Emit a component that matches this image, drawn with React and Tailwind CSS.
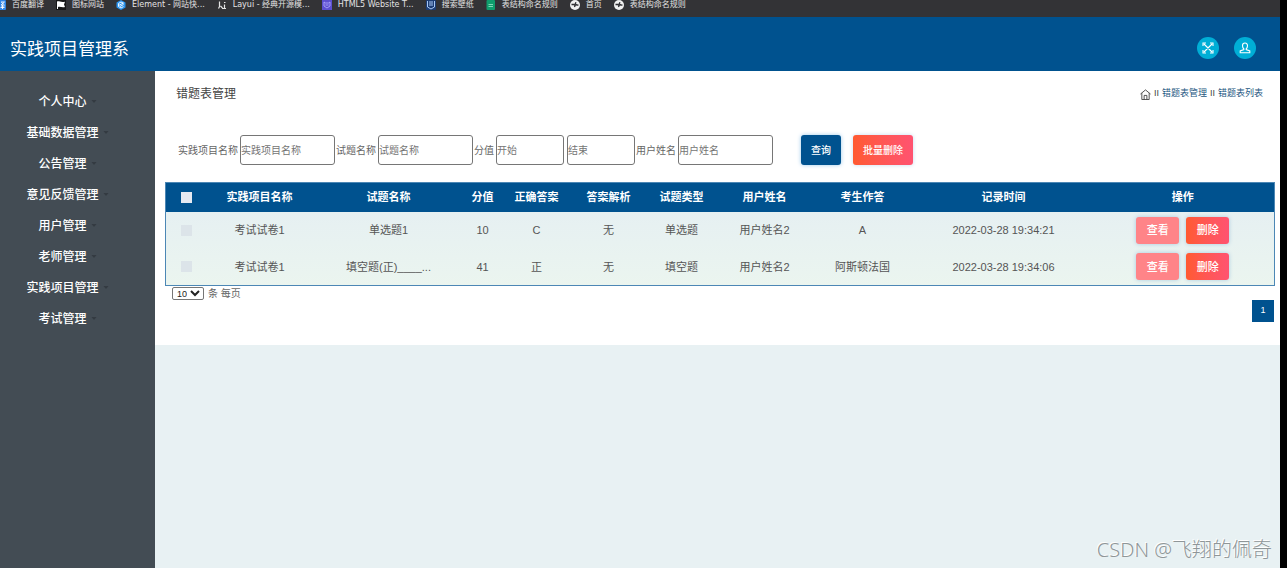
const bookmarks = [
  { label: '百度翻译', icon: 'translate' },
  { label: '图标网站', icon: 'flag' },
  { label: 'Element - 网站快...', icon: 'element' },
  { label: 'Layui - 经典开源模...', icon: 'layui' },
  { label: 'HTML5 Website T...', icon: 'html5' },
  { label: '搜索壁纸', icon: 'wallpaper' },
  { label: '表结构命名规则', icon: 'doc' },
  { label: '首页', icon: 'globe' },
  { label: '表结构命名规则', icon: 'globe' },
];

const menuItems = [
  '个人中心',
  '基础数据管理',
  '公告管理',
  '意见反馈管理',
  '用户管理',
  '老师管理',
  '实践项目管理',
  '考试管理',
];

const columns = [
  { title: '实践项目名称', width: 'w-[104px]' },
  { title: '试题名称', width: 'w-[154px]' },
  { title: '分值', width: 'w-[34px]' },
  { title: '正确答案', width: 'w-[74px]' },
  { title: '答案解析', width: 'w-[70px]' },
  { title: '试题类型', width: 'w-[76px]' },
  { title: '用户姓名', width: 'w-[90px]' },
  { title: '考生作答', width: 'w-[106px]' },
  { title: '记录时间', width: 'w-[176px]' },
  { title: '操作', width: 'w-[183px]' },
];

const rows = [
  ['考试试卷1', '单选题1', '10', 'C', '无', '单选题', '用户姓名2', 'A', '2022-03-28 19:34:21'],
  ['考试试卷1', '填空题(正)____...', '41', '正', '无', '填空题', '用户姓名2', '阿斯顿法国', '2022-03-28 19:34:06'],
];

const BookmarkIcon = ({ name }) => {
  switch (name) {
    case 'translate':
      return (
        <svg viewBox="0 0 10 10" className="w-2.5 h-2.5 shrink-0">
          <rect width="10" height="10" rx="1" fill="#2f86e8" />
          <path d="M5 2h3.500L5 5M5.500 2.500l3 2.500M6.500 4.500V9M5 6h3.500M4.500 7.500h4" stroke="#fff" strokeWidth="0.9" fill="none" />
        </svg>
      );
    case 'flag':
      return (
        <svg viewBox="0 0 10 10" className="w-2.5 h-2.5 shrink-0">
          <rect width="10" height="10" fill="#171717" />
          <path d="M1 1.500c2-1 3 1 8 .2L8 4.500l1 2.500c-3 .8-5-.8-7 0v2H1z" fill="#fff" />
        </svg>
      );
    case 'element':
      return (
        <svg viewBox="0 0 10 10" className="w-2.5 h-2.5 shrink-0">
          <path d="M5 0l4.500 2.500v5L5 10 .5 7.500v-5z" fill="#2b94ef" />
          <path d="M7.500 3.200L5 2 2.500 3.500v3L5 8l2.500-1.400M3 5.300L7.500 3M4 6.500l3.500-2" stroke="#fff" strokeWidth="0.9" fill="none" />
        </svg>
      );
    case 'layui':
      return (
        <svg viewBox="0 0 10 10" className="w-2.5 h-2.5 shrink-0">
          <path d="M2.500 1.500v5L1.500 8.500M3.500 6l2 2M7.500 4.500V8M7 2.500h1.500M5 8.500h4" stroke="#e4e4e4" strokeWidth="1.2" fill="none" />
        </svg>
      );
    case 'html5':
      return (
        <svg viewBox="0 0 10 10" className="w-2.5 h-2.5 shrink-0">
          <rect width="10" height="10" fill="#5c4fd0" />
          <path d="M2 2l1.500 1h3L8 2v4L5 8 2 6zM3.500 5h3" stroke="#b5adff" strokeWidth="0.8" fill="none" />
        </svg>
      );
    case 'wallpaper':
      return (
        <svg viewBox="0 0 10 10" className="w-2.5 h-2.5 shrink-0">
          <rect width="10" height="10" rx="1" fill="#1d3d74" />
          <path d="M1.500 1v6L5 9l3.500-2V1M4 1v5M6 1v5" stroke="#a9c8f5" strokeWidth="1" fill="none" />
        </svg>
      );
    case 'doc':
      return (
        <svg viewBox="0 0 10 10" className="w-2.5 h-2.5 shrink-0">
          <rect x="0.500" width="8.500" height="10" rx="1" fill="#0f9d6c" />
          <path d="M2.500 4.500h4.500M2.500 6.500h4.500" stroke="#7ed9b7" strokeWidth="1" />
        </svg>
      );
    default:
      return (
        <svg viewBox="0 0 10 10" className="w-2.5 h-2.5 shrink-0">
          <circle cx="5" cy="5" r="5" fill="#f1f1f1" />
          <path d="M1.500 4.500h2.300l1.400 1.200-.8 1.300M8.500 5.200L6.800 5 5.200 3.800 6 2.200" stroke="#2f2f33" strokeWidth="1.300" fill="none" />
        </svg>
      );
  }
};

const BookmarkBar = () => (
  <div className="flex items-start gap-3 h-[17px] bg-[#333336] overflow-hidden whitespace-nowrap font-['DejaVu_Sans','Noto_Sans_CJK_SC',sans-serif]">
    {bookmarks.map((item, index) => (
      <a key={index} href="#" className="flex items-center gap-[6px] h-[10px] text-[8px] leading-[10px] text-[#e3e3e3] first:-ml-1">
        <BookmarkIcon name={item.icon} />
        {item.label}
      </a>
    ))}
  </div>
);

const Header = () => (
  <header className="flex items-center justify-between h-[54px] pt-2 pl-[10px] pr-6 bg-[#00528f]">
    <h1 className="pt-1 text-[17px] leading-6 text-white">实践项目管理系</h1>
    <div className="flex gap-[15px]">
      <button type="button" aria-label="全屏" className="flex items-center justify-center w-[22px] h-[22px] rounded-full bg-[#00aed6] text-white">
        <svg viewBox="0 0 12 12" className="w-3 h-3" fill="none" stroke="currentColor" strokeWidth="1.1">
          <path d="M2 2l8 8M10 2l-8 8M1 4V1h3M8 1h3v3M11 8v3H8M4 11H1V8" />
        </svg>
      </button>
      <button type="button" aria-label="用户" className="flex items-center justify-center w-[22px] h-[22px] rounded-full bg-[#00aed6] text-white">
        <svg viewBox="0 0 12 12" className="w-3 h-3" fill="none" stroke="currentColor" strokeWidth="1.1">
          <path d="M6 1C4.300 1 3.500 2.200 3.500 3.700c0 1.300.5 2.500 1.300 3.100v.8L1.200 9v1.700h9.600V9L7.200 7.600v-.8c.8-.6 1.300-1.800 1.300-3.100C8.500 2.200 7.700 1 6 1z" />
        </svg>
      </button>
    </div>
  </header>
);

const Sidebar = () => (
  <nav className="w-[155px] shrink-0 pt-[15px] pr-5 bg-[#434c54]">
    <ul>
      {menuItems.map((item) => (
        <li key={item}>
          <a href="#" className="flex items-center justify-center gap-1 h-[31px] text-[12px] font-medium text-white">
            {item}
            <svg viewBox="0 0 6 3" className="w-[6px] h-[3px]">
              <path d="M0.500 0h5L3 3z" fill="#343b42" />
            </svg>
          </a>
        </li>
      ))}
    </ul>
  </nav>
);

const inputClass = 'h-[30px] border border-[#767676] rounded-[3px] bg-white text-[10px] text-[#555] placeholder:text-[#757575]';

const SearchForm = () => (
  <form className="flex items-center pl-[23px] text-[10px] text-[#666]">
    <label htmlFor="project" className="mr-[2px]">实践项目名称</label>
    <input id="project" type="text" placeholder="实践项目名称" className={`${inputClass} w-[95px] mr-px`} />
    <label htmlFor="question" className="mr-[2px]">试题名称</label>
    <input id="question" type="text" placeholder="试题名称" className={`${inputClass} w-[95px] mr-px`} />
    <label htmlFor="scoreStart" className="mr-[2px]">分值</label>
    <input id="scoreStart" type="text" placeholder="开始" className={`${inputClass} w-[68px] mr-[3px]`} />
    <input id="scoreEnd" type="text" aria-label="结束" placeholder="结束" className={`${inputClass} w-[68px] mr-px`} />
    <label htmlFor="username" className="mr-[2px]">用户姓名</label>
    <input id="username" type="text" placeholder="用户姓名" className={`${inputClass} w-[95px] mr-7`} />
    <button type="button" className="h-[30px] px-[10px] mr-3 rounded-[3px] bg-[#00528f] font-medium text-white shadow-[0_0_4px_#9cc9ea]">
      查询
    </button>
    <button type="button" className="h-[30px] px-[10px] rounded-[3px] bg-linear-to-r from-[#ff5a30] to-[#ff5370] font-medium text-white shadow-[0_0_4px_#c5dcf0]">
      批量删除
    </button>
  </form>
);

const actionClass = 'w-[43px] h-[27px] rounded-[3px] font-medium text-white shadow-[0_0_4px_#a9cbe0]';

const WrongQuestionTable = () => (
  <table className="w-full table-fixed border border-[#4c87b5] text-[11px] text-center">
    <thead>
      <tr className="h-[29px] bg-[#00528f] text-white">
        <th className="w-[42px]">
          <input type="checkbox" aria-label="全选" className="appearance-none block mx-auto w-[11px] h-[11px] bg-[#e6eaf2]" />
        </th>
        {columns.map((column) => (
          <th key={column.title} className={`${column.width} font-bold`}>{column.title}</th>
        ))}
      </tr>
    </thead>
    <tbody className="bg-linear-to-b from-[#e6f0f2] to-[#ebf5ef] text-[#555]">
      {rows.map((row, index) => (
        <tr key={index} className="h-[37px]">
          <td>
            <input type="checkbox" aria-label="选择" className="appearance-none block mx-auto w-[11px] h-[11px] bg-[#dce4e9]" />
          </td>
          {row.map((value, i) => (
            <td key={i} className="whitespace-nowrap">{value}</td>
          ))}
          <td>
            <div className="flex justify-center gap-[7px]">
              <button type="button" className={`${actionClass} bg-[#ff8488]`}>查看</button>
              <button type="button" className={`${actionClass} bg-linear-to-r from-[#ff5a30] to-[#ff5370]`}>删除</button>
            </div>
          </td>
        </tr>
      ))}
    </tbody>
  </table>
);

const App = () => {
  return (
    <div className="relative flex flex-col min-h-screen border-r-[7px] border-black bg-[#e8f1f3] font-['Liberation_Sans','Noto_Sans_CJK_SC',sans-serif]">
      <BookmarkBar />
      <Header />
      <div className="flex flex-1">
        <Sidebar />
        <main className="flex-1 min-w-0">
          <section className="pb-[23px] bg-white">
            <div className="flex items-center justify-between h-[46px] pl-[21px] pr-[17px]">
              <h2 className="text-[12px] text-[#444]">错题表管理</h2>
              <div className="flex items-center gap-[3px] text-[9px] text-[#24577f]">
                <a href="#" aria-label="首页">
                  <svg viewBox="0 0 12 12" className="block w-[11px] h-[11px]" fill="none" stroke="#444" strokeWidth="1">
                    <path d="M0.500 5.500L6 1l5.500 4.500M2 4.500v7h8v-7M4.500 11.500V7h3v4.500" />
                  </svg>
                </a>
                <span className="text-[#444]">II</span>
                <a href="#">错题表管理</a>
                <span className="text-[#444]">II</span>
                <a href="#">错题表列表</a>
              </div>
            </div>
            <div className="pt-[18px] pb-[17px]">
              <SearchForm />
            </div>
            <div className="pl-[10px] pr-[6px]">
              <WrongQuestionTable />
              <div className="flex items-center gap-1 h-[14px] pl-[7px] text-[10px] text-[#666]">
                <select id="pageSize" defaultValue="10" className="w-8 h-[13px] pl-0 border border-[#767676] rounded-[2px] bg-white text-[9px] leading-[11px] text-[#222]">
                  <option>10</option>
                  <option>20</option>
                  <option>50</option>
                </select>
                <label htmlFor="pageSize">条 每页</label>
              </div>
              <div className="flex justify-end">
                <button type="button" className="w-[22px] h-[22px] bg-[#00528f] text-[9px] text-white">1</button>
              </div>
            </div>
          </section>
        </main>
      </div>
      <div className="absolute right-2 bottom-1 font-['Noto_Sans','Noto_Sans_CJK_SC',sans-serif] text-[20px] leading-7 font-light text-[#8f9698] [text-shadow:-1px_-1px_0_#fff]">
        CSDN @飞翔的佩奇
      </div>
    </div>
  );
};

export default App;
